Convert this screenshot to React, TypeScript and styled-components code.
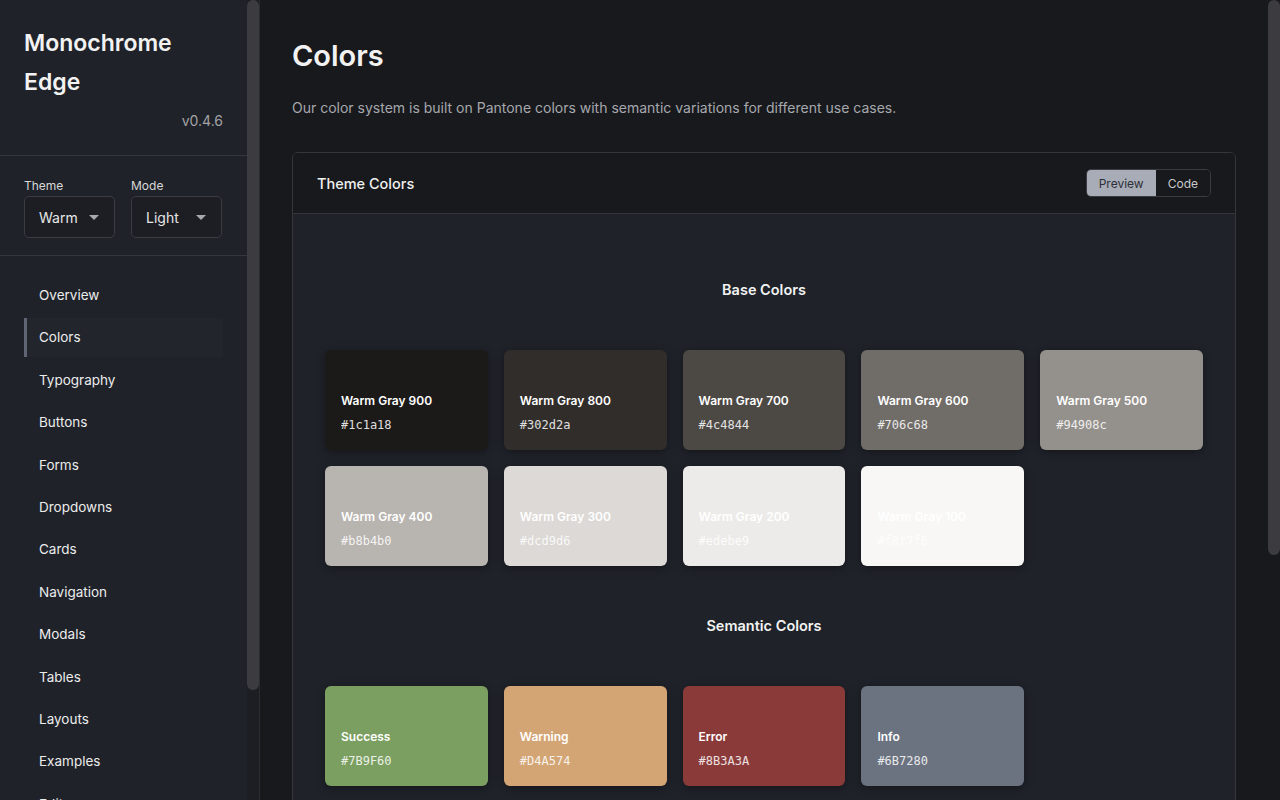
import React from 'react';
import styled, { createGlobalStyle } from 'styled-components';

const GlobalStyle = createGlobalStyle`
  html, body {
    margin: 0;
    padding: 0;
    height: 100%;
    background: #18191d;
    overflow: hidden;
  }
  * { box-sizing: border-box; }
  body {
    font-family: Inter, "Noto Sans", "Liberation Sans", sans-serif;
    color: #ececec;
  }
`;

const Shell = styled.div`
  display: flex;
  height: 100vh;
  width: 100vw;
`;

const Sidebar = styled.aside`
  width: 260px;
  flex-shrink: 0;
  height: 100vh;
  display: flex;
  background: #1f2229;
  border-right: 1px solid #2a2c31;
`;

const SidebarContent = styled.div`
  flex: 1;
  min-width: 0;
  overflow: hidden;
`;

// scroll rail drawn as a bar beside the scrolling pane
const Rail = styled.div<{ $bg: string }>`
  width: 12px;
  flex-shrink: 0;
  height: 100vh;
  background: ${({ $bg }) => $bg};
`;

const Thumb = styled.div<{ $len: number }>`
  height: ${({ $len }) => $len}px;
  border-radius: 6px;
  background: #3c3b40;
`;

const Brand = styled.div`
  padding: 24px 24px 24px;
  border-bottom: 1px solid #35373c;
`;

const BrandTitle = styled.h1`
  margin: 0;
  font-size: 23px;
  font-weight: 600;
  line-height: 39px;
  color: #f2f2f2;
`;

const Version = styled.div`
  margin-top: 9px;
  text-align: right;
  font-size: 14px;
  line-height: 20px;
  color: #a3a3a6;
`;

const Controls = styled.div`
  display: flex;
  gap: 16px;
  padding: 23px 24px 17px;
  border-bottom: 1px solid #35373c;
`;

const Control = styled.label`
  display: flex;
  flex-direction: column;
  gap: 3px;
  width: 91px;
`;

const ControlLabel = styled.span`
  font-size: 12px;
  line-height: 14px;
  color: #d8d8d8;
`;

const Select = styled.div`
  display: flex;
  align-items: center;
  justify-content: space-between;
  height: 42px;
  padding: 0 15px 0 14px;
  border: 1px solid #3a3c42;
  border-radius: 5px;
  background: #1c1e24;
  font-size: 14px;
  color: #e6e6e6;
`;

const Caret = styled.span`
  width: 0;
  height: 0;
  border-left: 5px solid transparent;
  border-right: 5px solid transparent;
  border-top: 5px solid #a9a9ad;
`;

const Nav = styled.nav`
  display: flex;
  flex-direction: column;
  gap: 4px;
  padding: 20px 24px 24px;
`;

const NavItem = styled.a<{ $active?: boolean }>`
  display: block;
  padding: 8px 12px;
  font-size: 13.5px;
  line-height: 22.4px;
  color: #ececec;
  text-decoration: none;
  border-left: 3px solid ${({ $active }) => ($active ? '#5f6573' : 'transparent')};
  background: ${({ $active }) => ($active ? 'rgba(255,255,255,0.015)' : 'transparent')};
`;

const MainWrap = styled.div`
  flex: 1;
  display: flex;
  min-width: 0;
  height: 100vh;
`;

const Main = styled.main`
  flex: 1;
  min-width: 0;
  height: 100vh;
  overflow: hidden;
  padding: 33px 32px 32px;
`;

const PageTitle = styled.h2`
  margin: 0;
  font-size: 29px;
  font-weight: 600;
  line-height: 46px;
  color: #f2f2f2;
`;

const Lead = styled.p`
  margin: 17px 0 32px;
  font-size: 14px;
  line-height: 24px;
  color: #a6a8ad;
`;

const Card = styled.section`
  border: 1px solid #34363b;
  border-radius: 6px;
  overflow: hidden;
`;

const CardHeader = styled.header`
  display: flex;
  align-items: center;
  justify-content: space-between;
  padding: 16px 24px;
  background: #17191c;
  border-bottom: 1px solid #34363b;
`;

const CardTitle = styled.h3`
  margin: 0;
  font-size: 14.5px;
  font-weight: 500;
  color: #f0f0f0;
`;

const Toggle = styled.div`
  display: flex;
  border: 1px solid #3a3c42;
  border-radius: 5px;
  overflow: hidden;
  height: 28px;
`;

const ToggleButton = styled.button<{ $active?: boolean }>`
  border: none;
  padding: 0 12px;
  font-family: inherit;
  font-size: 12px;
  background: ${({ $active }) => ($active ? '#a8acb7' : '#17191c')};
  color: ${({ $active }) => ($active ? '#2d3038' : '#c8c8cb')};
  cursor: pointer;
`;

const CardBody = styled.div`
  background: #1f2229;
  padding: 16px 32px 48px;
`;

const SectionTitle = styled.h4`
  margin: 48px 0;
  text-align: center;
  font-size: 14.5px;
  font-weight: 600;
  line-height: 24px;
  color: #f2f2f2;
`;

const SwatchGrid = styled.div`
  display: grid;
  grid-template-columns: repeat(5, 1fr);
  gap: 16px;
`;

const Swatch = styled.div<{ $color: string }>`
  height: 100px;
  border-radius: 6px;
  background: ${({ $color }) => $color};
  box-shadow: 0 2px 8px rgba(0, 0, 0, 0.35);
  display: flex;
  flex-direction: column;
  justify-content: flex-end;
  gap: 4px;
  padding: 15px 16px;
  color: #ffffff;
`;

const SwatchName = styled.div`
  font-size: 12px;
  font-weight: 600;
  line-height: 20px;
`;

const SwatchHex = styled.div`
  font-family: "DejaVu Sans Mono", "Liberation Mono", monospace;
  font-size: 12px;
  line-height: 20px;
  opacity: 0.85;
`;

const baseColors = [
  ['Warm Gray 900', '#1c1a18'],
  ['Warm Gray 800', '#302d2a'],
  ['Warm Gray 700', '#4c4844'],
  ['Warm Gray 600', '#706c68'],
  ['Warm Gray 500', '#94908c'],
  ['Warm Gray 400', '#b8b4b0'],
  ['Warm Gray 300', '#dcd9d6'],
  ['Warm Gray 200', '#edebe9'],
  ['Warm Gray 100', '#f8f7f6'],
];

const semanticColors = [
  ['Success', '#7B9F60'],
  ['Warning', '#D4A574'],
  ['Error', '#8B3A3A'],
  ['Info', '#6B7280'],
];

const navItems = [
  'Overview',
  'Colors',
  'Typography',
  'Buttons',
  'Forms',
  'Dropdowns',
  'Cards',
  'Navigation',
  'Modals',
  'Tables',
  'Layouts',
  'Examples',
  'Editor',
  'Icons',
  'Utilities',
];

const App: React.FC = () => {
  return (
    <>
      <GlobalStyle />
      <Shell>
        <Sidebar>
          <SidebarContent>
            <Brand>
              <BrandTitle>Monochrome Edge</BrandTitle>
              <Version>v0.4.6</Version>
            </Brand>
            <Controls>
              <Control>
                <ControlLabel>Theme</ControlLabel>
                <Select>
                  Warm <Caret />
                </Select>
              </Control>
              <Control>
                <ControlLabel>Mode</ControlLabel>
                <Select>
                  Light <Caret />
                </Select>
              </Control>
            </Controls>
            <Nav>
              {navItems.map((item) => (
                <NavItem key={item} $active={item === 'Colors'}>
                  {item}
                </NavItem>
              ))}
            </Nav>
          </SidebarContent>
          <Rail $bg="#1c1e23">
            <Thumb $len={690} />
          </Rail>
        </Sidebar>
        <MainWrap>
          <Main>
            <PageTitle>Colors</PageTitle>
            <Lead>
              Our color system is built on Pantone colors with semantic variations for different use cases.
            </Lead>
            <Card>
              <CardHeader>
                <CardTitle>Theme Colors</CardTitle>
                <Toggle>
                  <ToggleButton $active>Preview</ToggleButton>
                  <ToggleButton>Code</ToggleButton>
                </Toggle>
              </CardHeader>
              <CardBody>
                <SectionTitle>Base Colors</SectionTitle>
                <SwatchGrid>
                  {baseColors.map(([name, hex]) => (
                    <Swatch key={name} $color={hex}>
                      <SwatchName>{name}</SwatchName>
                      <SwatchHex>{hex}</SwatchHex>
                    </Swatch>
                  ))}
                </SwatchGrid>
                <SectionTitle>Semantic Colors</SectionTitle>
                <SwatchGrid>
                  {semanticColors.map(([name, hex]) => (
                    <Swatch key={name} $color={hex}>
                      <SwatchName>{name}</SwatchName>
                      <SwatchHex>{hex}</SwatchHex>
                    </Swatch>
                  ))}
                </SwatchGrid>
              </CardBody>
            </Card>
          </Main>
          <Rail $bg="#18191d">
            <Thumb $len={555} />
          </Rail>
        </MainWrap>
      </Shell>
    </>
  );
};

export default App;
